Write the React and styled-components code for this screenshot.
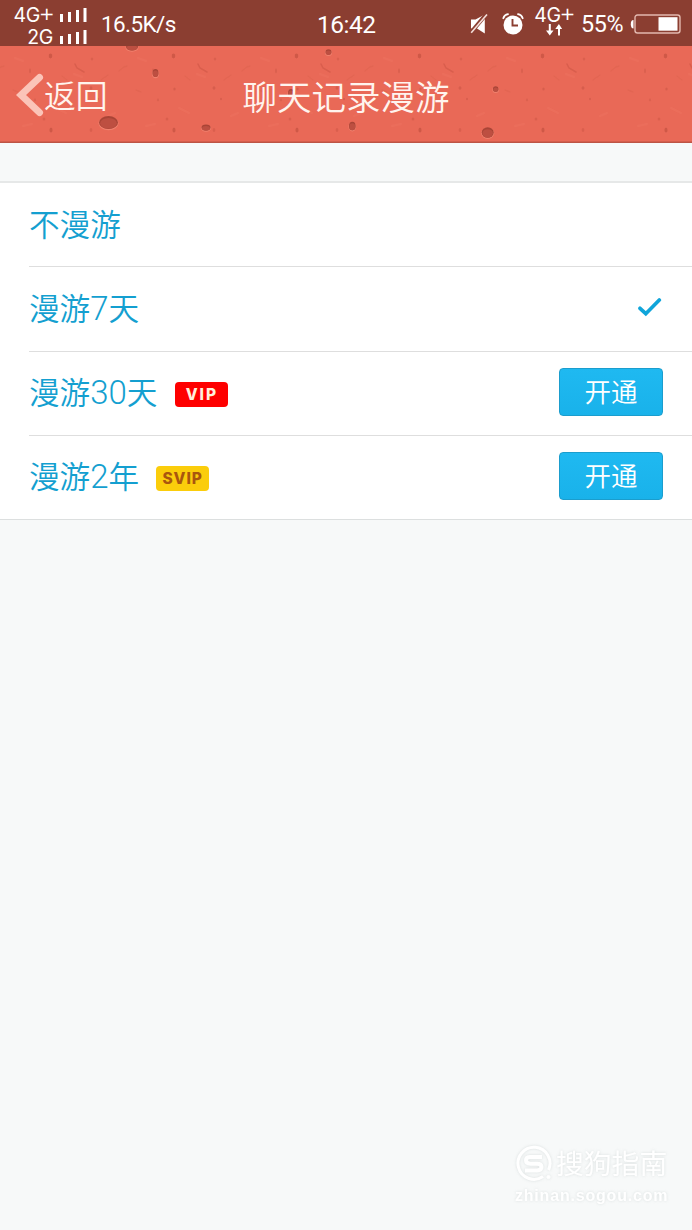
import React from "react";
import styled, { createGlobalStyle } from "styled-components";

const rows = [
  { id: "none", parts: ["不漫游"] },
  { id: "week", parts: ["漫游", "7", "天"], checked: true },
  { id: "month", parts: ["漫游", "30", "天"], badge: "VIP" },
  { id: "years", parts: ["漫游", "2", "年"], badge: "SVIP" },
];

const craters = [
  { x: 132, y: 1, rx: 6, ry: 3.5 },
  { x: 155.5, y: 27, rx: 3, ry: 4 },
  { x: 108.5, y: 76.5, rx: 9.5, ry: 6.5 },
  { x: 206, y: 81.5, rx: 4.5, ry: 3 },
  { x: 328.5, y: 6, rx: 3, ry: 2.8 },
  { x: 291, y: 47, rx: 3, ry: 4 },
  { x: 352.3, y: 80, rx: 3.3, ry: 4.3 },
  { x: 495.7, y: 43, rx: 2.8, ry: 2.8 },
  { x: 487.7, y: 86.5, rx: 6, ry: 5.2 },
];

const Texture = () => (
  <TextureSvg viewBox="0 0 692 97" preserveAspectRatio="none">
    <defs>
      <filter id="soften" x="0" y="0" width="100%" height="100%">
        <feGaussianBlur stdDeviation="0.7" />
      </filter>
      <pattern id="specks" width="123" height="97" x="48" patternUnits="userSpaceOnUse">
        <g fill="#c2503f">
          <ellipse cx="2.5" cy="10" rx="1.8" ry="2.4" opacity=".65" />
          <ellipse cx="3" cy="84" rx="1.6" ry="2.5" opacity=".65" />
          <ellipse cx="44" cy="13" rx="1.3" ry="1.6" opacity=".35" />
          <ellipse cx="43" cy="84" rx="1.3" ry="2" opacity=".4" />
          <ellipse cx="43" cy="42" rx="1.5" ry="1.8" opacity=".45" />
          <ellipse cx="50" cy="53" rx="1.2" ry="1.3" opacity=".4" />
          <ellipse cx="3.5" cy="43" rx="1.2" ry="1.5" opacity=".45" />
          <ellipse cx="105" cy="25" rx="1" ry="2.4" opacity=".4" />
          <ellipse cx="110" cy="54" rx="1.1" ry="1.4" opacity=".35" />
          <ellipse cx="119" cy="73" rx="1.4" ry="1.5" opacity=".4" />
        </g>
        <g fill="none" stroke="#c9513f" strokeLinecap="round">
          <path d="M27 18l2 4 7 4" strokeWidth="1.6" opacity=".5" />
          <path d="M71 25l5-4 3-1M53 34l7-5M14 30l5 4M88 44l5 2" strokeWidth="1.5" opacity=".18" />
        </g>
        <g fill="none" stroke="#f27e6a" strokeLinecap="round" opacity=".18">
          <path d="M8 62l10 5M60 70l7-3M90 12l8 3M98 80l9-2M26 28l8 3" strokeWidth="2" />
        </g>
      </pattern>
    </defs>
    <rect width="692" height="97" fill="#e96957" />
    <rect width="692" height="97" fill="url(#specks)" filter="url(#soften)" />
    {craters.map((c) => (
      <g key={c.x}>
        <ellipse cx={c.x} cy={c.y + 0.8} rx={c.rx + 0.5} ry={c.ry + 0.4} fill="#f38c78" opacity=".7" />
        <ellipse cx={c.x} cy={c.y} rx={c.rx} ry={c.ry} fill="#a94436" />
        <ellipse cx={c.x} cy={c.y + 0.8} rx={c.rx * 0.88} ry={c.ry * 0.8} fill="#bd4f41" />
      </g>
    ))}
    <rect y="95.5" width="692" height="1.5" fill="#bd5445" />
  </TextureSvg>
);

const SignalBars = () => (
  <svg width="27" height="14" viewBox="0 0 27 14" fill="#fff">
    <rect x="0" y="6" width="3" height="8" />
    <rect x="8" y="4" width="3" height="10" />
    <rect x="16" y="2" width="3" height="12" />
    <rect x="23.5" y="0" width="3" height="14" />
  </svg>
);

const MuteIcon = () => (
  <svg width="18" height="20" viewBox="0 0 18 20">
    <path d="M1 5.5h4.5L14.800 .5V19.500L7 14.500H1z" fill="#fff" />
    <path d="M.2 19.500L16.800 -.5" stroke="#8b3e31" strokeWidth="4" />
    <path d="M1.200 18.800L17 .5" stroke="#f3dfda" strokeWidth="1.600" />
  </svg>
);

const AlarmIcon = () => (
  <svg width="22" height="22" viewBox="0 0 22 22" fill="none">
    <circle cx="11" cy="12" r="9.5" fill="#fff" />
    <path d="M1.300 5.200Q2.500 1.800 6 1.200M16 1.200Q19.500 1.800 20.700 5.200" stroke="#fff" strokeWidth="1.800" strokeLinecap="round" />
    <path d="M10.500 6v6.500h5.500" stroke="#8b3e31" strokeWidth="1.900" />
  </svg>
);

const DataArrows = () => (
  <svg width="16" height="12" viewBox="0 0 16 12" fill="#fff">
    <path d="M2.800 0h2v6.500h2.700L3.800 11.500 0 6.500h2.800zM12 11.500h2V5h2.200L12.900 0 9.300 5H12z" />
  </svg>
);

const BatteryIcon = () => (
  <svg width="51" height="21" viewBox="0 0 51 21" fill="none">
    <path d="M3.500 6Q.8 6 .8 10.200T3.500 14.500z" fill="#fff" />
    <rect x="5" y="1" width="45" height="18" rx="2.5" stroke="#e3b8ae" strokeWidth="1.4" />
    <rect x="28.5" y="3.2" width="19" height="13.5" fill="#fff" />
  </svg>
);

const BackArrow = () => (
  <svg width="28" height="44" viewBox="0 0 28 44" fill="none">
    <path d="M23.500 4.500L5 22 23.500 39.500" stroke="#fbc4b8" strokeWidth="7" strokeLinecap="round" strokeLinejoin="miter" />
  </svg>
);

const CheckIcon = () => (
  <svg width="24" height="19" viewBox="0 0 24 19" fill="none">
    <path d="M2 10.300l5.800 5.400L21.300 2" stroke="#10a5da" strokeWidth="3.700" strokeLinecap="round" />
  </svg>
);

const SogouLogo = () => (
  <svg width="38" height="38" viewBox="0 0 38 38" fill="none" stroke="#fff">
    <path d="M28 31.500A16 16 0 1 1 33.500 25" strokeWidth="3" />
    <circle cx="33.500" cy="32" r="1.600" fill="#fff" />
    <path d="M27 12H15.500Q11 12 11 15.300T15.500 18.700H22Q26.500 18.700 26.500 22T22 25.500H10" strokeWidth="4" />
  </svg>
);

const App = () => {
  return (
    <>
      <GlobalStyle />
      <Page>
        <StatusBar>
          <Networks>
            <Network>
              <NetworkName>
                4G<Plus>+</Plus>
              </NetworkName>
              <SignalBars />
            </Network>
            <Network>
              <NetworkName>2G</NetworkName>
              <SignalBars />
            </Network>
          </Networks>
          <Speed>16.5K/s</Speed>
          <Clock>16:42</Clock>
          <StatusIcons>
            <MuteIcon />
            <AlarmIcon />
            <MobileData>
              <NetworkName>
                4G<Plus>+</Plus>
              </NetworkName>
              <DataArrows />
            </MobileData>
            <Percent>55%</Percent>
            <BatteryIcon />
          </StatusIcons>
        </StatusBar>
        <Header>
          <Texture />
          <BackButton>
            <BackArrow />
            <span>返回</span>
          </BackButton>
          <Title>聊天记录漫游</Title>
        </Header>
        <List>
          {rows.map((row) => (
            <Row key={row.id}>
              <Label>
                {row.parts.map((part) =>
                  /^\d+$/.test(part) ? <Digits key={part}>{part}</Digits> : part
                )}
              </Label>
              {row.badge && <Badge $gold={row.badge === "SVIP"}>{row.badge}</Badge>}
              <RowEnd $inset={row.checked}>
                {row.checked && <CheckIcon />}
                {row.badge && <OpenButton>开通</OpenButton>}
              </RowEnd>
            </Row>
          ))}
        </List>
        <Watermark>
          <Brand>
            <SogouLogo />
            <span>搜狗指南</span>
          </Brand>
          <Site>zhinan.sogou.com</Site>
        </Watermark>
      </Page>
    </>
  );
};

export default App;

const GlobalStyle = createGlobalStyle`
  * {
    box-sizing: border-box;
  }
  body {
    margin: 0;
    background: #f7f9f9;
  }
  svg {
    display: block;
    flex-shrink: 0;
  }
`;

const Page = styled.div`
  display: flex;
  flex-direction: column;
  width: 692px;
  height: 1230px;
  overflow: hidden;
  background: #f7f9f9;
  font-family: "Noto Sans CJK SC", sans-serif;
  font-weight: 350;
`;

const StatusBar = styled.div`
  display: grid;
  grid-template-columns: 101px 216px 60px 1fr;
  height: 46px;
  background: #8b3e31;
  color: #fff;
  font-family: Roboto, sans-serif;
  font-weight: 400;
`;

const Networks = styled.div`
  display: flex;
  flex-direction: column;
  padding: 4px 14px 0 0;
`;

const Network = styled.div`
  display: flex;
  align-items: center;
  justify-content: flex-end;
  gap: 7px;
  height: 22px;
`;

const NetworkName = styled.div`
  display: flex;
  align-items: center;
  font-family: Inter, sans-serif;
  font-size: 19.5px;
  line-height: 22px;
  letter-spacing: -0.4px;
  white-space: nowrap;
`;

const Plus = styled.div`
  margin: 0 -1px 3px -1px;
  font-family: "DejaVu Sans", sans-serif;
  font-size: 18.5px;
  line-height: 19px;
`;

const Speed = styled.div`
  padding-top: 2px;
  font-size: 22.5px;
  line-height: 45px;
  letter-spacing: -0.6px;
`;

const Clock = styled.div`
  padding-top: 2px;
  font-size: 24.5px;
  line-height: 46px;
  letter-spacing: -0.5px;
`;

const StatusIcons = styled.div`
  display: grid;
  grid-template-columns: 32px 31px 48px 49px 51px;
  align-items: center;
  justify-content: end;
  padding-right: 11px;
`;

const MobileData = styled.div`
  display: flex;
  flex-direction: column;
  align-items: center;
  width: 42px;
  margin-top: -8px;

  svg {
    margin-top: -2px;
  }
`;

const Percent = styled.div`
  width: 43px;
  font-size: 23.3px;
  letter-spacing: -0.4px;
`;

const Header = styled.div`
  position: relative;
  display: grid;
  grid-template-columns: 1fr auto 1fr;
  align-items: center;
  height: 97px;
  color: #fff4ee;
`;

const TextureSvg = styled.svg`
  position: absolute;
  inset: 0;
  width: 100%;
  height: 100%;
`;

const BackButton = styled.div`
  position: relative;
  display: flex;
  align-items: center;
  padding-left: 16px;
  font-size: 31.8px;
  line-height: 44px;

  span {
    padding-bottom: 2px;
  }
`;

const Title = styled.div`
  position: relative;
  padding-top: 1px;
  font-size: 34.5px;
  line-height: 46px;
`;

const List = styled.div`
  margin-top: 38px;
  padding-left: 29px;
  border-top: 2px solid #e6e8e8;
  border-bottom: 1px solid #dcdfdf;
  background: #fff;
`;

const Row = styled.div`
  display: flex;
  align-items: center;
  height: 84.4px;
  padding-right: 29px;

  &:first-child {
    height: 83.2px;
  }

  &:last-child {
    height: 84px;
  }

  & + & {
    border-top: 1px solid #dedede;
  }
`;

const Label = styled.div`
  padding-bottom: 4px;
  color: #149fd0;
  font-size: 30.6px;
  line-height: 44px;
`;

const Digits = styled.span`
  font-family: Roboto, sans-serif;
  font-size: 33px;
  font-weight: 300;
  line-height: 1;
`;

const Badge = styled.div`
  width: 53px;
  height: 25px;
  margin: 2px 0 0 ${(props) => (props.$gold ? "17px" : "18px")};
  border-radius: 4px;
  background: ${(props) => (props.$gold ? "#fbcd0b" : "#fe0000")};
  color: ${(props) => (props.$gold ? "#a9560e" : "#fff0dc")};
  font-family: Inter, sans-serif;
  font-size: 15.5px;
  font-weight: 800;
  line-height: 25px;
  letter-spacing: ${(props) => (props.$gold ? "0.9px" : "2px")};
  text-align: center;
`;

const RowEnd = styled.div`
  margin: 0 ${(props) => (props.$inset ? "1.5px" : "0")} 2px auto;
`;

const OpenButton = styled.button`
  display: block;
  width: 104px;
  height: 48px;
  padding: 0 0 2px;
  border: 1px solid #1b9dcd;
  border-radius: 4px;
  background: linear-gradient(#1fb9f1, #19b2ea);
  color: #fff;
  font-family: inherit;
  font-size: 26.5px;
  font-weight: 350;
  line-height: 44px;
`;

const Watermark = styled.div`
  align-self: flex-end;
  width: 155px;
  margin: auto 22px 23px 0;
  color: #fff;
  filter: drop-shadow(0 0 1.5px rgba(120, 130, 130, 0.22));
`;

const Brand = styled.div`
  display: flex;
  align-items: center;
  gap: 3px;
  margin-bottom: 1px;
  font-size: 27.8px;
  font-weight: 400;
  line-height: 38px;

  span {
    padding-bottom: 3px;
  }
`;

const Site = styled.div`
  font-family: "Liberation Sans", sans-serif;
  font-size: 16px;
  font-weight: 700;
  line-height: 22px;
  letter-spacing: 0.8px;
  white-space: nowrap;
`;
